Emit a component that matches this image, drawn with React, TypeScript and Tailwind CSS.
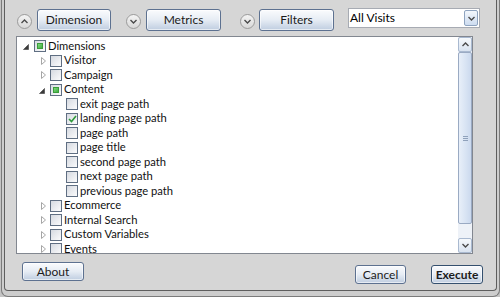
import React from 'react'

type Row = {
  label: string
  level: 0 | 1 | 2
  arrow?: 'open' | 'closed'
  state?: 'partial' | 'checked'
}

const rows: Row[] = [
  { label: 'Dimensions', level: 0, arrow: 'open', state: 'partial' },
  { label: 'Visitor', level: 1, arrow: 'closed' },
  { label: 'Campaign', level: 1, arrow: 'closed' },
  { label: 'Content', level: 1, arrow: 'open', state: 'partial' },
  { label: 'exit page path', level: 2 },
  { label: 'landing page path', level: 2, state: 'checked' },
  { label: 'page path', level: 2 },
  { label: 'page title', level: 2 },
  { label: 'second page path', level: 2 },
  { label: 'next page path', level: 2 },
  { label: 'previous page path', level: 2 },
  { label: 'Ecommerce', level: 1, arrow: 'closed' },
  { label: 'Internal Search', level: 1, arrow: 'closed' },
  { label: 'Custom Variables', level: 1, arrow: 'closed' },
  { label: 'Events', level: 1, arrow: 'closed' },
]

const indent = ['pl-0', 'pl-4', 'pl-8']

const font = "font-['Lato','Liberation_Sans',sans-serif]"

function Chevron({ dir }: { dir: 'up' | 'down' }) {
  return (
    <svg width="7" height="5" viewBox="0 0 7 5">
      <path
        d={dir === 'up' ? 'M0.5 4 L3.5 1 L6.5 4' : 'M0.5 1 L3.5 4 L6.5 1'}
        fill="none"
        stroke="#4a4a4a"
        strokeWidth="1.4"
      />
    </svg>
  )
}

function Circle({ dir, className }: { dir: 'up' | 'down'; className: string }) {
  return (
    <div
      className={`w-[15px] h-[15px] rounded-full border border-[#9b9b9b] bg-linear-to-b from-[#f4f4f4] to-[#d8d8d8] flex items-center justify-center ${className}`}
    >
      <Chevron dir={dir} />
    </div>
  )
}

function Button({ label, className, bold }: { label: string; className: string; bold?: boolean }) {
  return (
    <div
      className={`rounded-[3px] border ${bold ? 'border-[#34506f] font-bold' : 'border-[#5d7190]'} bg-linear-to-b from-[#fafbfd] via-[#e6ecf4] to-[#bfcde0] shadow-[inset_0_0_0_1px_rgba(255,255,255,0.6)] flex items-center justify-center text-[12px] text-[#1b1b1b] ${className}`}
    >
      {label}
    </div>
  )
}

function CheckBox({ state }: { state?: 'partial' | 'checked' }) {
  return (
    <div className="w-[12px] h-[12px] border border-[#5f6e82] bg-linear-to-br from-[#d6dae1] to-[#fbfbfc] flex items-center justify-center shrink-0">
      {state === 'partial' && (
        <div className="w-[6px] h-[6px] bg-linear-to-br from-[#7fd97f] to-[#3fae3f] border border-[#3b9c3b]" />
      )}
      {state === 'checked' && (
        <svg width="9" height="8" viewBox="0 0 9 8">
          <path d="M1 4 L3.5 6.5 L8 1" fill="none" stroke="#2f9a3a" strokeWidth="1.6" />
        </svg>
      )}
    </div>
  )
}

function Arrow({ kind }: { kind?: 'open' | 'closed' }) {
  if (kind === 'open')
    return (
      <svg width="6" height="6" viewBox="0 0 6 6" className="ml-[6px] mt-[2px]">
        <polygon points="5.5,0.5 5.5,5.5 0.5,5.5" fill="#3a3a3a" stroke="#555" strokeWidth="0.8" />
      </svg>
    )
  if (kind === 'closed')
    return (
      <svg width="5" height="8" viewBox="0 0 5 8" className="ml-[8px]">
        <polygon points="0.5,0.5 4.5,4 0.5,7.5" fill="#fff" stroke="#a6a6a6" strokeWidth="1" />
      </svg>
    )
  return null
}

export default function App() {
  return (
    <div className={`w-[500px] h-[297px] bg-[#c4c4c4] flex flex-col pl-px ${font}`}>
      <div className="flex-1 flex flex-col border-l border-r border-b border-[#7b7b7b] rounded-b-[7px] bg-[#cdcdcd] px-[2px] pb-[5px]">
        <div className="flex-1 flex flex-col border-l border-r border-b border-[#5e5e5e] rounded-b-[4px] bg-[#d6d6d6]">
          {/* top toolbar */}
          <div className="flex items-start pt-[8px]">
            <Circle dir="up" className="mt-[6px] ml-[12px]" />
            <Button label="Dimension" className="mt-px ml-[5px] w-[74px] h-[22px]" />
            <Circle dir="down" className="mt-[6px] ml-[15px]" />
            <Button label="Metrics" className="mt-px ml-[5px] w-[75px] h-[22px]" />
            <Circle dir="down" className="mt-[6px] ml-[19px]" />
            <Button label="Filters" className="mt-px ml-[4px] w-[75px] h-[22px]" />
            <div className="ml-[14px] w-[132px] h-[20px] border border-[#a7abb3] bg-white flex items-center">
              <span className="flex-1 pl-[1px] text-[12px] text-black">All Visits</span>
              <div className="w-[14px] h-[16px] mr-px rounded-[2px] border border-[#8ea3bf] bg-linear-to-b from-[#f3f7fc] to-[#cddcf0] flex items-center justify-center">
                <Chevron dir="down" />
              </div>
            </div>
          </div>

          {/* tree */}
          <div className="mt-[5px] ml-[11px] w-[457px] h-[218px] border border-[#828790] bg-white flex">
            <div className="flex-1 overflow-hidden pt-[2px]">
              {rows.map((r) => (
                <div key={r.label} className={`flex items-center h-[14.5px] ${indent[r.level]}`}>
                  <div className="w-[17px] flex items-center shrink-0">
                    <Arrow kind={r.arrow} />
                  </div>
                  <CheckBox state={r.state} />
                  <span className="ml-[2px] text-[11.2px] text-[#111] whitespace-nowrap">{r.label}</span>
                </div>
              ))}
            </div>
            <div className="w-[14px] flex flex-col bg-[#eef2f8]">
              <div className="h-[15px] rounded-[2px] border border-[#a9b9d0] bg-linear-to-b from-[#f6f9fc] to-[#d9e3f0] flex items-center justify-center">
                <Chevron dir="up" />
              </div>
              <div className="h-[172px] rounded-[2px] border border-[#9aaac3] bg-linear-to-r from-[#e8eff9] via-[#dae5f4] to-[#cbd9ee] flex flex-col items-center justify-center gap-[1px]">
                <div className="w-[5px] h-px bg-[#8fa1bb]" />
                <div className="w-[5px] h-px bg-[#8fa1bb]" />
                <div className="w-[5px] h-px bg-[#8fa1bb]" />
              </div>
              <div className="flex-1" />
              <div className="h-[15px] rounded-[2px] border border-[#a9b9d0] bg-linear-to-b from-[#f6f9fc] to-[#d9e3f0] flex items-center justify-center">
                <Chevron dir="down" />
              </div>
            </div>
          </div>

          {/* bottom buttons */}
          <div className="flex items-start mt-[8px]">
            <Button label="About" className="ml-[17px] w-[62px] h-[19px]" />
            <Button label="Cancel" className="mt-[3px] ml-auto w-[51px] h-[19px]" />
            <Button label="Execute" bold className="mt-[3px] ml-[25px] mr-[13px] w-[52px] h-[19px]" />
          </div>
        </div>
      </div>
    </div>
  )
}
